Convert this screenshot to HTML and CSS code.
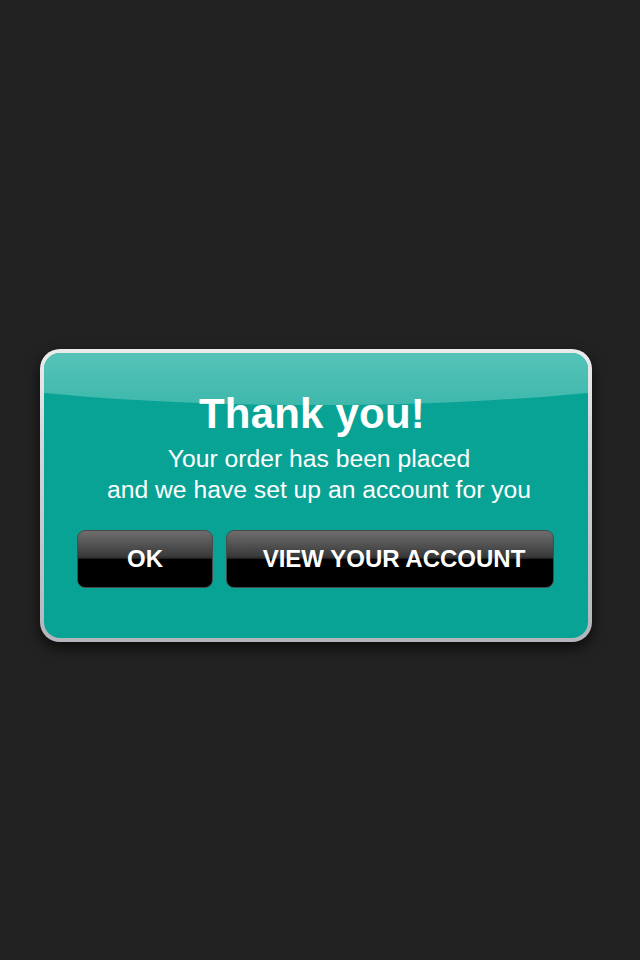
FILE: index.html
```html
<!DOCTYPE html>
<html>
<head>
<meta charset="utf-8">
<link rel="stylesheet" href="styles.css">
</head>
<body>
<div class="dialog">
  <div class="panel">
    <div class="gloss"></div>
    <h1 class="title">Thank you!</h1>
    <p class="message">Your order has been placed<br>and we have set up an account for you</p>
    <div class="actions">
      <button class="btn btn-ok">OK</button>
      <button class="btn btn-view">VIEW YOUR ACCOUNT</button>
    </div>
  </div>
</div>
</body>
</html>
```
FILE: styles.css
```css
html, body {
  margin: 0;
  padding: 0;
  background: #222222;
  height: 100%;
}
body {
  font-family: "Liberation Sans", Arial, sans-serif;
  padding-top: 349px;
  box-sizing: border-box;
}
.dialog {
  width: 552px;
  margin-left: 40px;
  box-sizing: border-box;
  padding: 4px;
  border-radius: 20px;
  background: linear-gradient(#ececec, #d6d6da 30%, #b4b4bc);
  box-shadow: 0 6px 14px rgba(0, 0, 0, 0.65);
}
.panel {
  position: relative;
  overflow: hidden;
  border-radius: 16px;
  background: #09a396;
  padding: 37px 0 50px;
  text-align: center;
  color: #fff;
}
.gloss {
  position: absolute;
  left: -328px;
  top: -168px;
  width: 1200px;
  height: 220px;
  border-radius: 50%;
  background: linear-gradient(#66cbc0 60%, #3fb8ac 100%);
  pointer-events: none;
}
.title {
  position: relative;
  margin: 0 8px 0 0;
  font-size: 42px;
  line-height: 48px;
  font-weight: 700;
  letter-spacing: 0.2px;
}
.message {
  position: relative;
  margin: 5px 0 0 6px;
  font-size: 24.7px;
  line-height: 31px;
}
.actions {
  position: relative;
  display: flex;
  gap: 13px;
  margin-top: 25px;
  padding: 0 34px 0 33px;
}
.btn {
  height: 58px;
  box-sizing: border-box;
  border: 1px solid #4a4a4a;
  border-radius: 8px;
  background: linear-gradient(#6e6e6e 0%, #3a3a3a 45%, #262626 49%, #000 50%, #000 100%);
  color: #fff;
  font-family: "Liberation Sans", Arial, sans-serif;
  font-weight: 700;
  font-size: 24px;
  padding: 0;
  display: flex;
  align-items: center;
  justify-content: center;
}
.btn-ok {
  width: 136px;
}
.btn-view {
  flex: 1;
  padding-left: 8px;
}
```
